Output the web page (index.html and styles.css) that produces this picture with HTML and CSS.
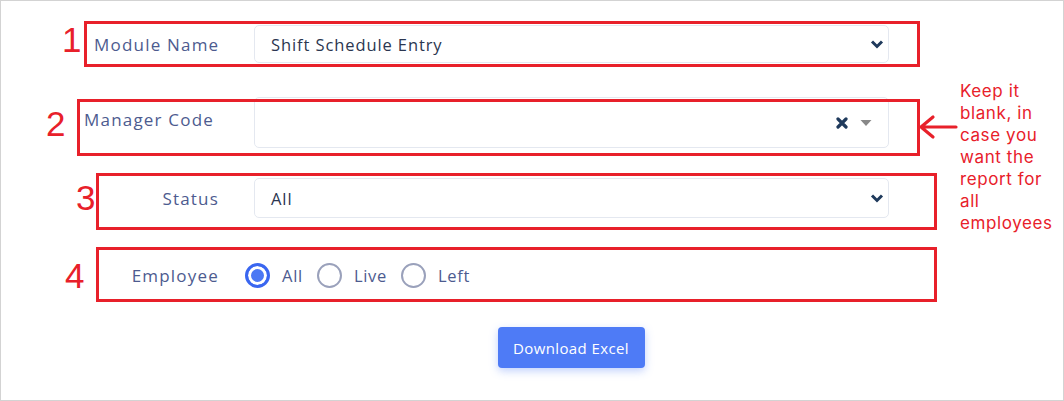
FILE: index.html
```html
<!DOCTYPE html>
<html>
<head>
<meta charset="utf-8">
<link rel="stylesheet" href="styles.css">
</head>
<body>
<div class="page">
  <form class="form">
    <div class="row row-module">
      <label class="label">Module Name</label>
      <div class="select">
        <span class="value">Shift Schedule Entry</span>
        <svg class="chev" width="14" height="10" viewBox="0 0 14 10"><path d="M2 2.5 L7 7.5 L12 2.5" fill="none" stroke="#1f3a5c" stroke-width="3"/></svg>
      </div>
    </div>
    <div class="row row-manager">
      <label class="label label-top">Manager Code</label>
      <div class="select select-tall">
        <span class="value"></span>
        <svg class="clear" width="12" height="12" viewBox="0 0 12 12"><path d="M2 2 L10 10 M10 2 L2 10" stroke="#1f3a5c" stroke-width="3.2" stroke-linecap="round"/></svg>
        <svg class="caret" width="12" height="8" viewBox="0 0 12 8"><path d="M0.5 1 L11.5 1 L6 7 Z" fill="#888"/></svg>
      </div>
    </div>
    <div class="row row-status">
      <label class="label">Status</label>
      <div class="select">
        <span class="value">All</span>
        <svg class="chev" width="14" height="10" viewBox="0 0 14 10"><path d="M2 2.5 L7 7.5 L12 2.5" fill="none" stroke="#1f3a5c" stroke-width="3"/></svg>
      </div>
    </div>
    <div class="row row-employee">
      <label class="label">Employee</label>
      <div class="radios">
        <span class="radio"><span class="dot checked"></span>All</span>
        <span class="radio"><span class="dot"></span>Live</span>
        <span class="radio"><span class="dot"></span>Left</span>
      </div>
    </div>
    <div class="actions">
      <button type="button" class="btn">Download Excel</button>
    </div>
  </form>

  <div class="mark mark1"></div>
  <div class="mark mark2"></div>
  <div class="mark mark3"></div>
  <div class="mark mark4"></div>
  <span class="num num1">1</span>
  <span class="num num2">2</span>
  <span class="num num3">3</span>
  <span class="num num4">4</span>
  <svg class="arrow" width="40" height="26" viewBox="0 0 40 26"><path d="M3 13 L38 13 M15 3 L3 13 L15 23" fill="none" stroke="#e8202a" stroke-width="3.2" stroke-linecap="round" stroke-linejoin="round"/></svg>
  <p class="note">Keep it<br>blank, in<br>case you<br>want the<br>report for<br>all<br>employees</p>
</div>
</body>
</html>
```

FILE: styles.css
```css
html, body {
  margin: 0;
  padding: 0;
  background: #fff;
}
.page {
  position: relative;
  width: 1064px;
  height: 401px;
  box-sizing: border-box;
  border: 1px solid #d3d3d3;
  font-family: "Open Sans", "Liberation Sans", sans-serif;
}
.form {
  padding-top: 24px;
  display: flex;
  flex-direction: column;
}
.row {
  display: flex;
  align-items: center;
  gap: 35px;
}
.label {
  width: 218px;
  box-sizing: border-box;
  text-align: right;
  white-space: nowrap;
  font-size: 17px;
  letter-spacing: 1.2px;
  color: #4d5b8f;
  flex: none;
}
.row-module .label,
.row-manager .label {
  text-align: left;
}
.row-module .label { padding-left: 93px; }
.row-manager .label { padding-left: 83px; }
.label-top { align-self: flex-start; padding-top: 11px; }
.select {
  width: 635px;
  height: 38px;
  box-sizing: border-box;
  border: 1px solid #e4e8f0;
  border-radius: 5px;
  display: flex;
  align-items: center;
  padding: 0 4px 0 16px;
  color: #2b3650;
  font-size: 16.5px;
  letter-spacing: 0.9px;
  flex: none;
}
.select .value { flex: 1; }
.select-tall { height: 51px; }
.row-manager { margin-top: 34px; }
.row-status { margin-top: 30px; }
.row-status .select { height: 40px; }
.row-employee { margin-top: 42px; height: 30px; gap: 26px; }
.clear { margin-right: 12px; margin-top: 1px; }
.caret { margin-right: 12px; }
.radios {
  display: flex;
  align-items: center;
  gap: 14px;
}
.radio {
  display: flex;
  align-items: center;
  gap: 12px;
  font-size: 16.5px;
  letter-spacing: 0.7px;
  color: #4d5b8f;
}
.dot {
  width: 25px;
  height: 25px;
  box-sizing: border-box;
  border: 2px solid #9aa1bb;
  border-radius: 50%;
  display: inline-block;
}
.dot.checked {
  border: 3px solid #3a66f0;
  background: #4c78f4;
  box-shadow: inset 0 0 0 3px #fff;
}
.actions {
  display: flex;
  justify-content: center;
  margin-top: 37px;
  padding-left: 78px;
}
.btn {
  width: 147px;
  height: 41px;
  border: none;
  border-radius: 4px;
  background: #4e7bf6;
  color: #fff;
  font-family: "Open Sans", "Liberation Sans", sans-serif;
  font-size: 15px;
  font-weight: 500;
  letter-spacing: 0.4px;
  box-shadow: 0 3px 8px rgba(78, 123, 246, 0.35);
}
.mark {
  position: absolute;
  border: 3px solid #e8202a;
  box-sizing: border-box;
}
.mark1 { left: 83px; top: 20px; width: 836px; height: 46px; }
.mark2 { left: 76px; top: 98px; width: 843px; height: 57px; }
.mark3 { left: 95px; top: 172px; width: 841px; height: 57px; }
.mark4 { left: 95px; top: 246px; width: 841px; height: 55px; }
.num {
  position: absolute;
  font-family: "Liberation Sans", Arial, sans-serif;
  font-size: 35px;
  line-height: 1;
  color: #e8202a;
}
.num1 { left: 61px; top: 21px; }
.num2 { left: 45px; top: 105px; }
.num3 { left: 75px; top: 179px; }
.num4 { left: 64px; top: 257px; }
.arrow {
  position: absolute;
  left: 917px;
  top: 113px;
}
.note {
  position: absolute;
  left: 959px;
  top: 79px;
  margin: 0;
  font-family: Inter, Roboto, "Liberation Sans", sans-serif;
  font-size: 17px;
  letter-spacing: 0.6px;
  line-height: 22px;
  color: #e8202a;
}
```
